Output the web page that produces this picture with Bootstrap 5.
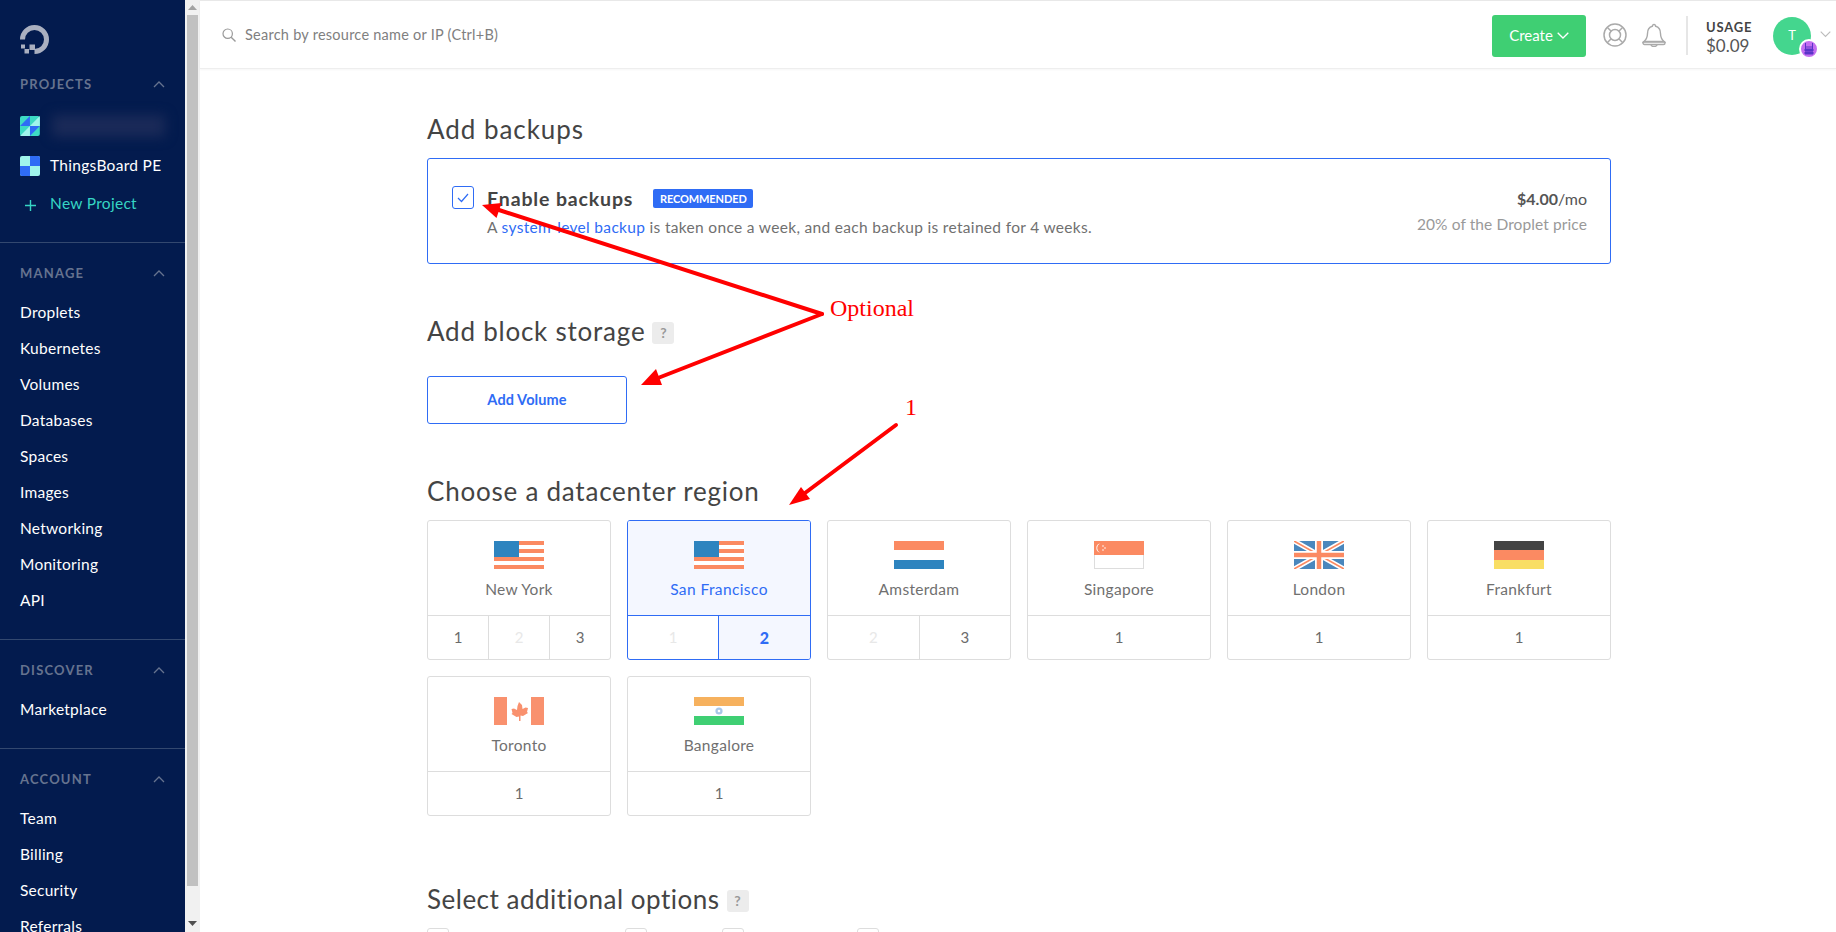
<!DOCTYPE html>
<html lang="en">
<head>
<meta charset="utf-8">
<title>Create Droplet</title>
<link href="https://cdn.jsdelivr.net/npm/bootstrap@5.3.0/dist/css/bootstrap.min.css" rel="stylesheet">
<style>
html,body{height:932px;overflow:hidden}
body{font-family:"Lato","Liberation Sans",sans-serif;color:#444;background:#fff}
.shell{height:932px;position:relative}
.side{width:185px;flex:none;background:#031b4e;height:932px;overflow:hidden}
.side-sec{padding:20px 0 21px;border-bottom:1px solid #33486f}
.side-sec.first{padding:25px 0 20px}
.logo-wrap{height:29px;margin:0 0 20px 20px}
.side-label{height:20px;margin-bottom:11px;padding:0 20px;font-size:13px;font-weight:700;letter-spacing:1.2px;color:#66738f;line-height:20px}
.side-link{display:block;height:36px;line-height:36px;padding:0 20px;color:#fff;font-size:15.5px;letter-spacing:.25px;text-decoration:none;white-space:nowrap}
.first .side-label{margin-bottom:12px}
.proj-row{height:40px;padding:0 20px;color:#fff;font-size:15.5px;letter-spacing:.3px}
.proj-new{height:36px;color:#36d6c4}
.plus{width:30px;padding-left:5px;flex:none}
.blur-bar{width:114px;height:22px;background:#1a2a58;filter:blur(6px);margin-left:12px}
.proj-name{margin-left:10px}
.sbar{width:15px;flex:none;background:#f1f1f1;height:932px;padding:0 2px 0 2px}
.sbar-arrow{height:15px}
.sbar-thumb{height:871px;background:#c1c1c1}
.sbar-down{margin-top:30px}
.main-col{min-width:0}
.topbar{height:69px;border-top:1px solid #e8e8e8;border-bottom:1px solid #eee;box-shadow:0 1px 2px rgba(0,0,0,.04);padding:0 0 0 22px}
.search-txt{font-size:14.5px;color:#808080;margin-left:9px;letter-spacing:.25px}
.create-btn{width:94px;height:42px;background:#3fcf73;border:0;color:#fff;font-size:15px;border-radius:3px;padding:0;margin-top:2px}
.vline{width:2px;height:39px;background:#e6e6e6;margin:2px 18px 0 20px}
.life-ic{margin-left:17px}
.bell-ic{margin-left:15px}
.usage-box{width:67px;padding-top:6px}
.usage-hd{font-size:13px;font-weight:700;letter-spacing:.8px;color:#444;line-height:16px}
.usage-val{font-size:17px;color:#555;line-height:22px}
.avatar{width:38px;height:38px;border-radius:50%;background:#44d68e;color:#fff;font-size:13px;position:relative;margin-top:3px}
.ava-badge{position:absolute;right:-8px;bottom:-4px;width:20px;height:20px;border-radius:50%;background:#c46ef0;border:2px solid #fff}
.ava-chev{margin:0 5px 0 9px}
.page-body{width:1184px;margin-left:227px;padding-top:44px}
.sec-title{font-size:26px;font-weight:400;line-height:32px;color:#444;margin:0;letter-spacing:.77px}
.sec-wide{letter-spacing:.95px}
.sec-tight{letter-spacing:.5px}
.help-chip{display:inline-flex;align-items:center;justify-content:center;width:22px;height:22px;background:#ececec;color:#999;font-size:14px;font-weight:700;border-radius:3px;margin-left:7px;vertical-align:3px;letter-spacing:0}
.backup-box{height:106px;margin:13px 0 51px;border:1px solid #2f6cf5;border-radius:3px;padding:0 23px 0 24px}
.backup-left{margin-top:4px}
.backup-right{margin-top:1px}
.chk{width:22px;height:23px;border:1px solid #2f6cf5;border-radius:3px;flex:none;margin-right:13px;margin-top:-1px}
.backup-title{font-size:19.5px;font-weight:700;color:#444;line-height:24px;letter-spacing:.85px}
.rec-chip{background:#2f6cf5;color:#fff;font-size:11px;font-weight:700;border-radius:2px;padding:0;width:100px;height:19px;line-height:19px;margin:-2px 0 0 20px;letter-spacing:-.1px}
.backup-desc{font-size:15.5px;color:#707070;line-height:24px;margin-top:4px;letter-spacing:.32px}
.backup-desc a{color:#2f6cf5;text-decoration:none}
.price{font-size:16px;font-weight:700;color:#555;line-height:24px}
.price span{font-weight:400}
.price-note{font-size:15.5px;color:#999;line-height:24px;margin-top:1px;letter-spacing:.1px}
.vol-btn{width:200px;height:48px;border:1px solid #2f6cf5;border-radius:3px;color:#2f6cf5;font-size:14.5px;font-weight:700;background:#fff;margin:0;padding:0;letter-spacing:.1px}
.mt-title{margin-top:29px}
.title-gap{margin-top:51px}
.region-grid{display:grid;grid-template-columns:repeat(6,184px);column-gap:16px;row-gap:16px;margin:13px 0 67px}
.region{height:140px;border:1px solid #ddd;border-radius:3px;overflow:hidden;background:#fff}
.region-top{height:95px;padding-top:20px;text-align:center;font-size:15.5px;letter-spacing:.3px;color:#707070;border-bottom:1px solid #ddd}
.region-top svg{display:block;margin:0 auto 9px}
.region-top div{line-height:22px}
.dc{font-size:15px;color:#6b6b6b;line-height:43px;text-align:center;flex:1 1 0}
.dc+.dc{border-left:1px solid #ddd}
.dc.off{color:#e8e8e8}
.region.on{border-color:#2f6cf5}
.region.on .region-top{background:#f4f7ff;color:#2f6cf5;border-bottom-color:#2f6cf5;letter-spacing:.4px}
.region.on .dc+.dc{border-left-color:#2f6cf5}
.dc.sel{background:#f4f7ff;color:#2f6cf5;font-weight:900;flex:0 0 92px;font-size:16px}
.opt-row{margin-top:13px;height:30px;position:relative}
.opt-chk{width:22px;height:22px;border:1px solid #ddd;border-radius:3px}
.opt1{margin-right:176px}.opt2{margin-right:75px}.opt3{margin-right:113px}
.note-layer{position:absolute;left:0;top:0;pointer-events:none}
.note{position:absolute;color:#f00;font-family:"Liberation Serif",serif;font-size:24px;line-height:28px}
.note-a{left:830px;top:294px}
.note-b{left:905px;top:393px}
</style>
</head>
<body>
<div class="shell d-flex">
  <nav class="side">
    <div class="side-sec first">
      <div class="logo-wrap">
        <svg width="29" height="29" viewBox="0 0 29 29"><path d="M14.5 24.5V29A14.5 14.5 0 1 0 0 14.5h5A9.5 9.5 0 1 1 14.5 24" fill="#aab0c0"/><rect x="9.5" y="19.5" width="5.5" height="5.5" fill="#aab0c0"/><rect x="4.5" y="24" width="4.5" height="4.5" fill="#aab0c0"/><rect x="1" y="19.5" width="4" height="4" fill="#aab0c0"/></svg>
      </div>
      <div class="side-label d-flex justify-content-between align-items-center">PROJECTS
        <svg width="12" height="7" viewBox="0 0 12 7"><path d="M1 6l5-5 5 5" fill="none" stroke="#66738f" stroke-width="1.3"/></svg></div>
      <div class="proj-row d-flex align-items-center">
        <svg width="20" height="20" viewBox="0 0 20 20"><rect width="20" height="20" rx="2" fill="#3ddbc4"/><path d="M0 10L10 0v10zM10 20l10-10H10z" fill="#2f6cf5"/><path d="M10 10h10V0z M0 20h10V10z" fill="#a0f5ec"/></svg>
        <div class="blur-bar"></div>
      </div>
      <div class="proj-row d-flex align-items-center">
        <svg width="20" height="20" viewBox="0 0 20 20"><rect width="20" height="20" rx="2" fill="#a0f5ec"/><path d="M10 0h8a2 2 0 0 1 2 2v8H10zM0 10h10v10H2a2 2 0 0 1-2-2z" fill="#2f6cf5"/></svg>
        <span class="proj-name">ThingsBoard PE</span>
      </div>
      <div class="proj-row proj-new d-flex align-items-center">
        <span class="plus"><svg width="11" height="11" viewBox="0 0 11 11"><path d="M5.5 0v11M0 5.5h11" stroke="#36d6c4" stroke-width="1.4"/></svg></span>New Project
      </div>
    </div>
    <div class="side-sec">
      <div class="side-label d-flex justify-content-between align-items-center">MANAGE
        <svg width="12" height="7" viewBox="0 0 12 7"><path d="M1 6l5-5 5 5" fill="none" stroke="#66738f" stroke-width="1.3"/></svg></div>
      <a class="side-link" href="#">Droplets</a><a class="side-link" href="#">Kubernetes</a><a class="side-link" href="#">Volumes</a><a class="side-link" href="#">Databases</a><a class="side-link" href="#">Spaces</a><a class="side-link" href="#">Images</a><a class="side-link" href="#">Networking</a><a class="side-link" href="#">Monitoring</a><a class="side-link" href="#">API</a>
    </div>
    <div class="side-sec">
      <div class="side-label d-flex justify-content-between align-items-center">DISCOVER
        <svg width="12" height="7" viewBox="0 0 12 7"><path d="M1 6l5-5 5 5" fill="none" stroke="#66738f" stroke-width="1.3"/></svg></div>
      <a class="side-link" href="#">Marketplace</a>
    </div>
    <div class="side-sec">
      <div class="side-label d-flex justify-content-between align-items-center">ACCOUNT
        <svg width="12" height="7" viewBox="0 0 12 7"><path d="M1 6l5-5 5 5" fill="none" stroke="#66738f" stroke-width="1.3"/></svg></div>
      <a class="side-link" href="#">Team</a><a class="side-link" href="#">Billing</a><a class="side-link" href="#">Security</a><a class="side-link" href="#">Referrals</a>
    </div>
  </nav>
  <div class="sbar">
    <div class="sbar-arrow d-flex align-items-center justify-content-center"><svg width="9" height="5" viewBox="0 0 9 5"><path d="M4.5 0L9 5H0z" fill="#a3a3a3"/></svg></div>
    <div class="sbar-thumb"></div>
    <div class="sbar-arrow sbar-down d-flex align-items-center justify-content-center"><svg width="9" height="5" viewBox="0 0 9 5"><path d="M4.5 5L9 0H0z" fill="#505050"/></svg></div>
  </div>
  <div class="main-col flex-grow-1">
    <header class="topbar d-flex align-items-center">
      <svg width="14" height="14" viewBox="0 0 14 14"><circle cx="5.7" cy="5.7" r="4.7" fill="none" stroke="#999" stroke-width="1.2"/><path d="M9.2 9.2L13.5 13.5" stroke="#999" stroke-width="1.4"/></svg>
      <span class="search-txt">Search by resource name or IP (Ctrl+B)</span>
      <div class="ms-auto d-flex align-items-center">
        <button class="btn create-btn d-flex align-items-center justify-content-center" type="button">Create<svg class="ms-1" width="12" height="7" viewBox="0 0 12 7"><path d="M.7.7L6 6 11.3.7" fill="none" stroke="#fff" stroke-width="1.3"/></svg></button>
        <svg class="life-ic" width="24" height="24" viewBox="0 0 24 24" fill="none" stroke="#aaa" stroke-width="1.5"><circle cx="12" cy="12" r="11"/><circle cx="12" cy="12" r="5.5"/><path d="M4.2 4.2l4 4M19.8 4.2l-4 4M4.2 19.8l4-4M19.8 19.8l-4-4"/></svg>
        <svg class="bell-ic" width="24" height="24" viewBox="0 0 24 24" fill="none" stroke="#aaa" stroke-width="1.4"><path d="M12 1.5a1.6 1.6 0 0 1 1.6 1.7C17 4 18.5 7 18.5 10.500c0 4 1 6 4 8.500H1.500c3-2.500 4-4.500 4-8.500C5.500 7 7 4 10.400 3.200A1.600 1.600 0 0 1 12 1.500z"/><rect x="1" y="18.500" width="22" height="3" rx="1.500"/><path d="M9 21.500a3 2 0 0 0 6 0"/></svg>
        <div class="vline"></div>
        <div class="usage-box"><div class="usage-hd">USAGE</div><div class="usage-val">$0.09</div></div>
        <div class="avatar d-flex align-items-center justify-content-center">T<span class="ava-badge d-flex align-items-center justify-content-center"><svg width="10" height="12" viewBox="0 0 10 12"><path d="M1.500 0v6M8.500 0v6M1.500 4h7M1 6h8v2H1zM1 9h8v2H1z" fill="#5a35c9" stroke="#5a35c9"/></svg></span></div>
        <svg class="ava-chev" width="11" height="7" viewBox="0 0 11 7"><path d="M.7.7l4.800 4.800L10.300.7" fill="none" stroke="#bbb" stroke-width="1.100"/></svg>
      </div>
    </header>
    <main class="page-body">
      <h2 class="sec-title sec-wide">Add backups</h2>
      <div class="backup-box d-flex align-items-center justify-content-between">
        <div class="backup-left d-flex align-items-start">
          <div class="chk d-flex align-items-center justify-content-center"><svg width="12" height="10" viewBox="0 0 12 10"><path d="M1 5l3.500 3.500L11 1" fill="none" stroke="#2f6cf5" stroke-width="1.200"/></svg></div>
          <div>
            <div class="d-flex align-items-center"><span class="backup-title">Enable backups</span><span class="badge rec-chip">RECOMMENDED</span></div>
            <div class="backup-desc">A <a href="#">system-level backup</a> is taken once a week, and each backup is retained for 4 weeks.</div>
          </div>
        </div>
        <div class="backup-right text-end">
          <div class="price">$4.00<span>/mo</span></div>
          <div class="price-note">20% of the Droplet price</div>
        </div>
      </div>
      <h2 class="sec-title">Add block storage<span class="help-chip">?</span></h2>
      <div class="mt-title"><button class="btn vol-btn" type="button">Add Volume</button></div>
      <h2 class="sec-title title-gap">Choose a datacenter region</h2>
      <div class="region-grid">
        <div class="region">
          <div class="region-top"><svg width="50" height="28" viewBox="0 0 50 28"><path fill="#fb8a62" d="M0 0h50v4H0zM0 8h50v4H0zM0 16h50v4H0zM0 24h50v4H0z"/><rect width="25" height="16" fill="#2e84bf"/></svg><div>New York</div></div>
          <div class="d-flex"><div class="dc">1</div><div class="dc off">2</div><div class="dc">3</div></div>
        </div>
        <div class="region on">
          <div class="region-top"><svg width="50" height="28" viewBox="0 0 50 28"><path fill="#fff" d="M0 0h50v28H0z"/><path fill="#fb8a62" d="M0 0h50v4H0zM0 8h50v4H0zM0 16h50v4H0zM0 24h50v4H0z"/><rect width="25" height="16" fill="#2e84bf"/></svg><div>San Francisco</div></div>
          <div class="d-flex"><div class="dc off">1</div><div class="dc sel">2</div></div>
        </div>
        <div class="region">
          <div class="region-top"><svg width="50" height="28" viewBox="0 0 50 28"><rect width="50" height="9" fill="#fb8a62"/><rect y="19" width="50" height="9" fill="#2e84bf"/></svg><div>Amsterdam</div></div>
          <div class="d-flex"><div class="dc off">2</div><div class="dc">3</div></div>
        </div>
        <div class="region">
          <div class="region-top"><svg width="50" height="28" viewBox="0 0 50 28"><rect x=".5" y=".5" width="49" height="27" fill="#fff" stroke="#ddd"/><rect width="50" height="14" fill="#fb8a62"/><path d="M6 2.500a4.600 4.600 0 0 0 0 9 5 5 0 0 1 0-9z" fill="#fff"/><circle cx="9" cy="5" r=".8" fill="#fff"/><circle cx="11" cy="7" r=".8" fill="#fff"/><circle cx="9" cy="9" r=".8" fill="#fff"/></svg><div>Singapore</div></div>
          <div class="d-flex"><div class="dc">1</div></div>
        </div>
        <div class="region">
          <div class="region-top"><svg width="50" height="28" viewBox="0 0 50 28"><rect width="50" height="28" fill="#4a87bd"/><path d="M0 0l50 28M50 0L0 28" stroke="#fff" stroke-width="5"/><path d="M0 0l50 28M50 0L0 28" stroke="#fb8a62" stroke-width="1.600"/><path d="M25 0v28M0 14h50" stroke="#fff" stroke-width="8"/><path d="M25 0v28M0 14h50" stroke="#fb8a62" stroke-width="4.500"/></svg><div>London</div></div>
          <div class="d-flex"><div class="dc">1</div></div>
        </div>
        <div class="region">
          <div class="region-top"><svg width="50" height="28" viewBox="0 0 50 28"><rect width="50" height="9" fill="#444"/><rect y="9" width="50" height="10" fill="#fb8a62"/><rect y="19" width="50" height="9" fill="#f9de64"/></svg><div>Frankfurt</div></div>
          <div class="d-flex"><div class="dc">1</div></div>
        </div>
        <div class="region">
          <div class="region-top"><svg width="50" height="28" viewBox="0 0 50 28"><rect width="13" height="28" fill="#f9916e"/><rect x="37" width="13" height="28" fill="#f9916e"/><path d="M25 5l3 3 .500 4 3-1.500 2.500.500-1 4 1 1-5 3-2.500-.500V24h-1.500v-4.500l-2.500.500-5-3 1-1-1-4 2.500-.500 3 1.500.500-4z" fill="#f9916e"/></svg><div>Toronto</div></div>
          <div class="d-flex"><div class="dc">1</div></div>
        </div>
        <div class="region">
          <div class="region-top"><svg width="50" height="28" viewBox="0 0 50 28"><rect width="50" height="9" fill="#f6b15e"/><rect y="19" width="50" height="9" fill="#3fcf73"/><circle cx="25" cy="14" r="3.600" fill="#a9c7e8"/><circle cx="25" cy="14" r="1.300" fill="#fff"/></svg><div>Bangalore</div></div>
          <div class="d-flex"><div class="dc">1</div></div>
        </div>
      </div>
      <h2 class="sec-title sec-tight">Select additional options<span class="help-chip">?</span></h2>
      <div class="opt-row d-flex"><div class="opt-chk opt1"></div><div class="opt-chk opt2"></div><div class="opt-chk opt3"></div><div class="opt-chk"></div></div>
    </main>
  </div>
  <svg class="note-layer" width="1836" height="932" viewBox="0 0 1836 932">
    <g stroke="#f00" stroke-width="4" fill="none" stroke-linecap="round"><path d="M822 314L499 210"/><path d="M822 314L658 378"/><path d="M896 425L805 493"/></g>
    <path d="M482 205L501.500 203 496.500 218z" fill="#f00"/>
    <path d="M641 385L662 385 656 369z" fill="#f00"/>
    <path d="M789 505L801 487 810 499z" fill="#f00"/>
  </svg>
  <div class="note note-a">Optional</div>
  <div class="note note-b">1</div>
</div>
<script src="https://cdn.jsdelivr.net/npm/bootstrap@5.3.0/dist/js/bootstrap.bundle.min.js"></script>
</body>
</html>
